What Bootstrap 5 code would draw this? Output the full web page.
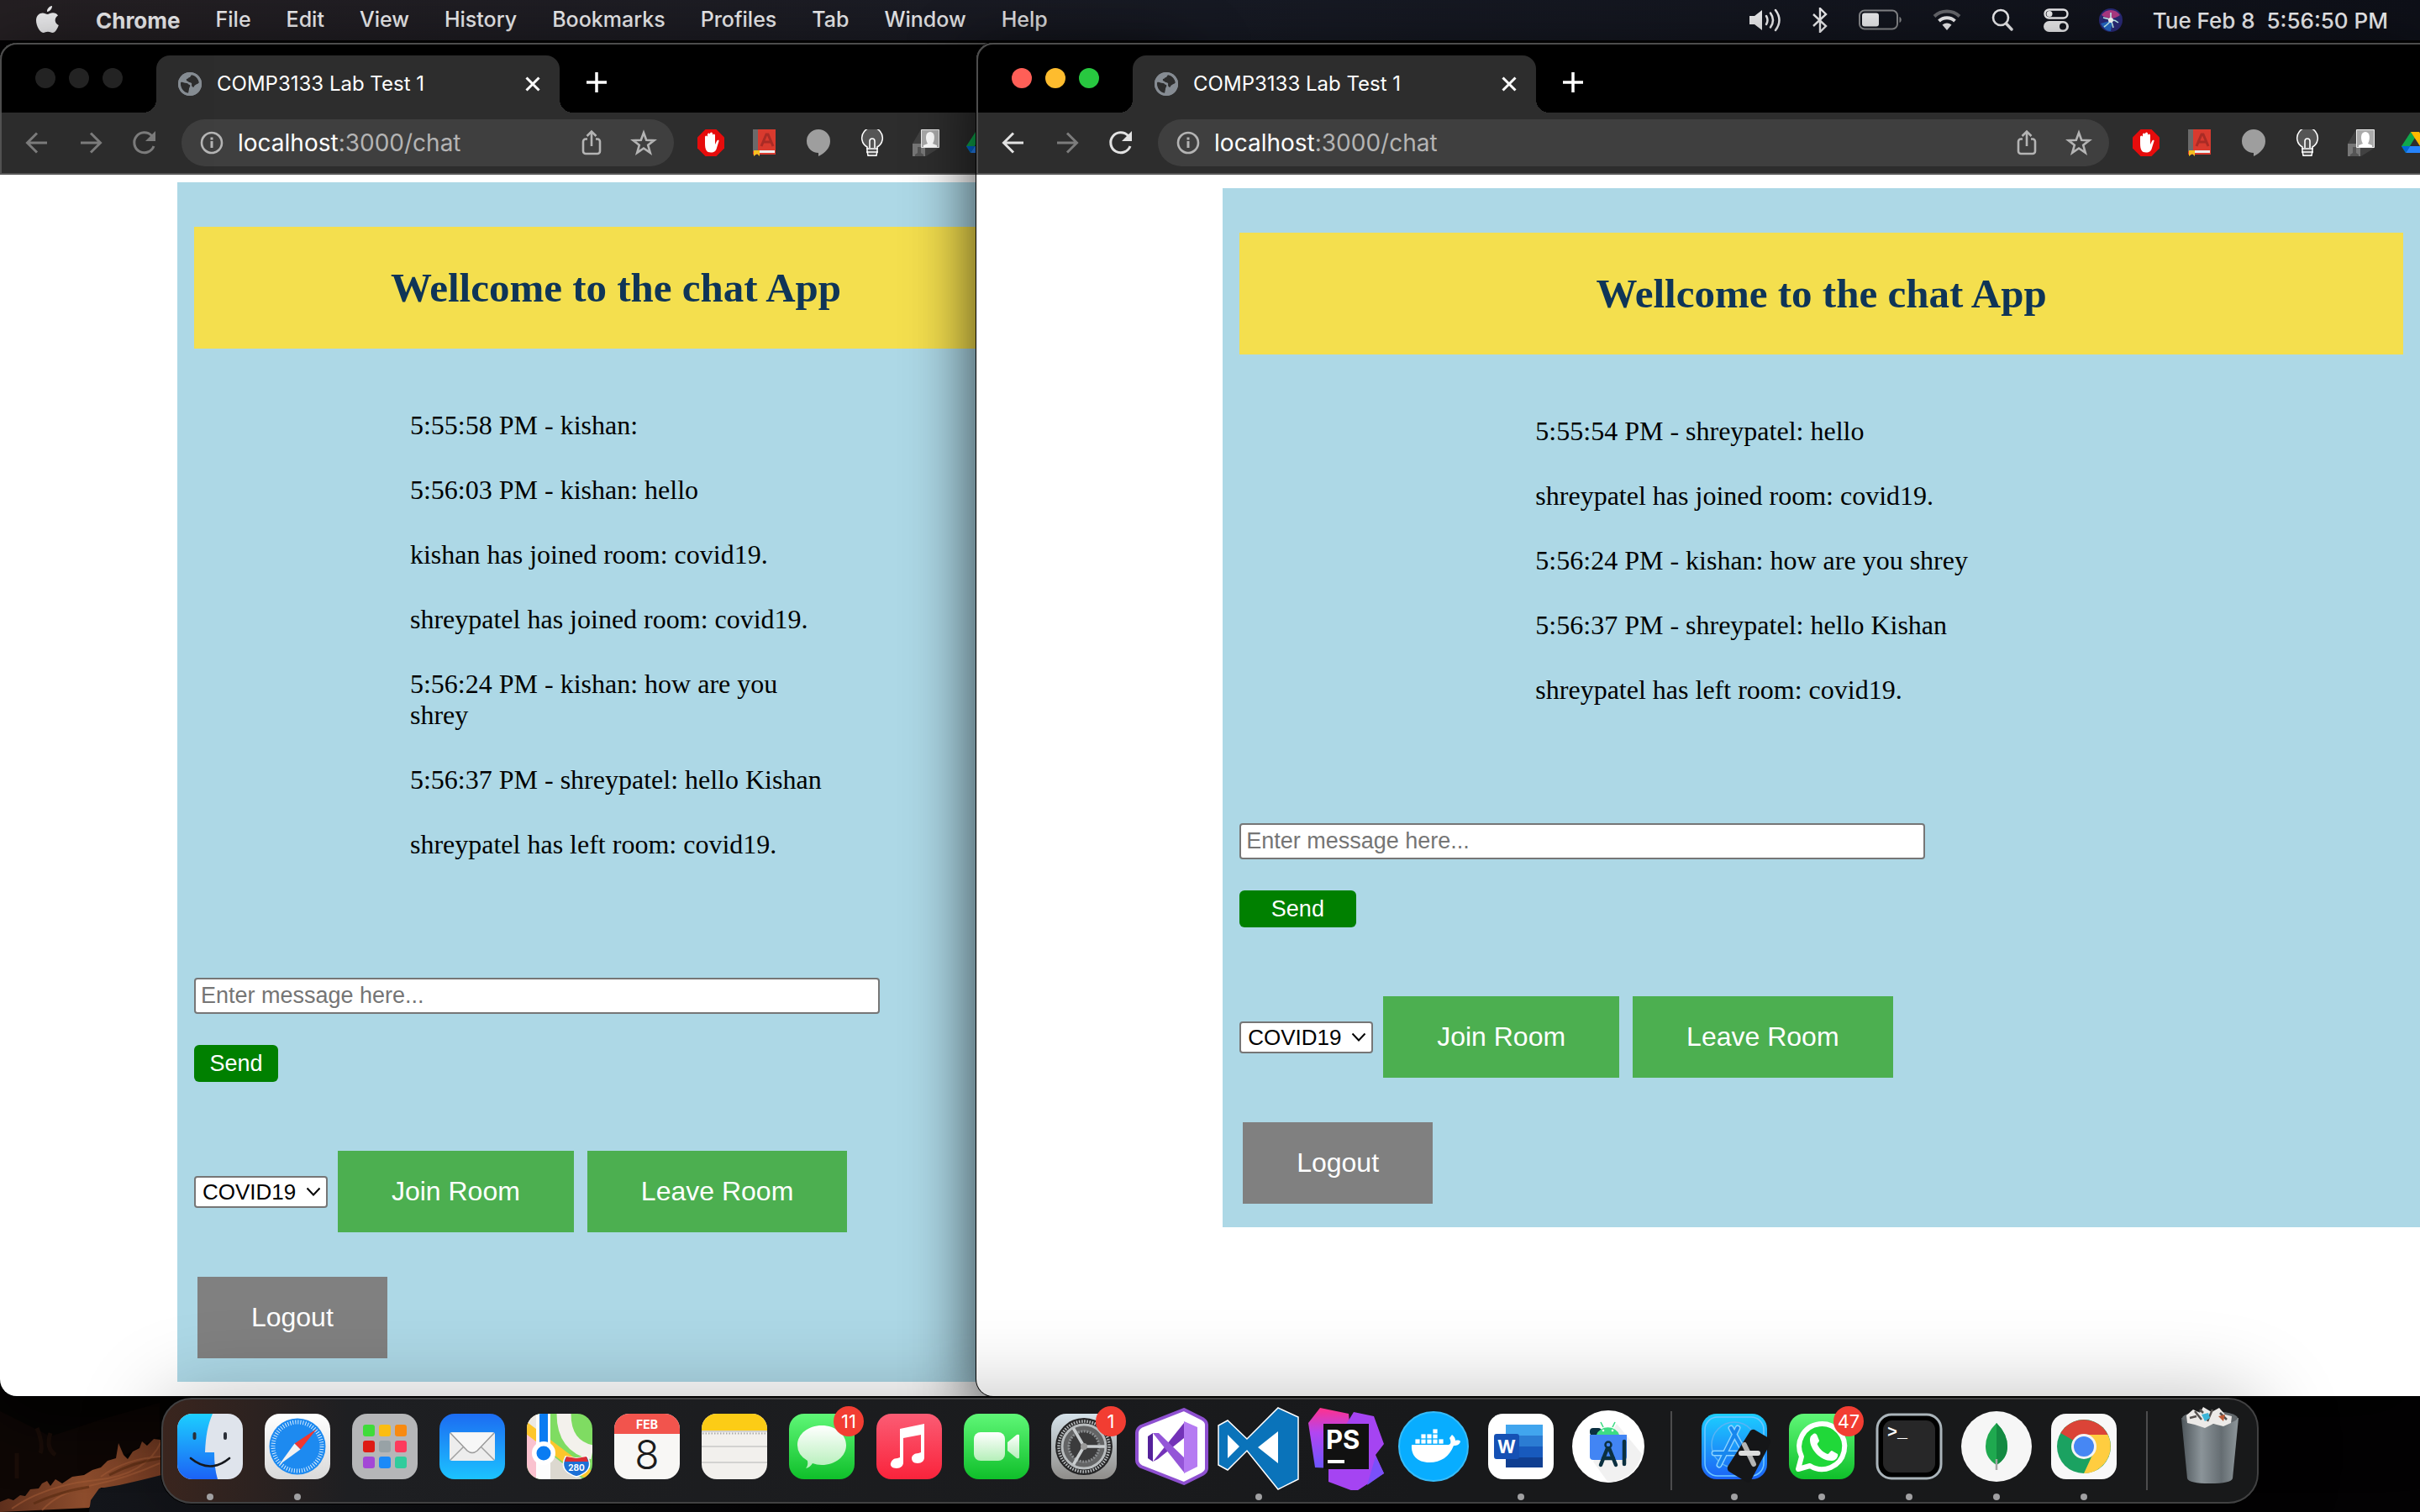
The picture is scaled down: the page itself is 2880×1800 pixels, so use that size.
<!DOCTYPE html>
<html lang="en">
<head>
<meta charset="utf-8">
<meta name="viewport" content="width=device-width, initial-scale=1">
<title>COMP3133 Lab Test 1</title>
<link href="https://cdn.jsdelivr.net/npm/bootstrap@5.3.0/dist/css/bootstrap.min.css" rel="stylesheet">
<style>
  body { background: #030203; font-family: Inter, "Liberation Sans", sans-serif; color: #fff; }
  a { text-decoration: none; color: inherit; }
  button { border: 0; padding: 0; background: none; color: inherit; }
  svg { display: block; flex: none; }
  .wallpaper { left: 0; bottom: 0; }
  .menubar { height: 48px; background: linear-gradient(90deg, #241f22, #171a24 50%, #0e1018); font-size: 25px; font-weight: 500; color: #ececee; padding: 0 38px 0 40px; }
  .menubar .menus { gap: 42px; }
  .menubar .appname, .menubar .clock { font-size: 26px; }
  .menubar .status { gap: 36px; }
  .desk { height: calc(100vh - 48px); }
  .win { top: 3px; bottom: 138px; border-radius: 20px; background: #fff; isolation: isolate; box-shadow: 0 0 0 1px #000, 0 20px 80px rgba(0,0,0,.75); }
  .win::before { content: ""; position: absolute; z-index: 2; top: 0; left: 0; right: 0; height: 155px; border: 2px solid #565656; border-bottom: 0; border-radius: 20px 20px 0 0; pointer-events: none; opacity: .9; }
  .win-one { left: 0; width: 48.82%; }
  .win-two { left: 40.35%; right: 0; border-radius: 20px 0 0 20px; }
  .win-two::before { border-right: 0; border-radius: 20px 0 0 0; }
  .tabstrip { height: 83px; background: #000; padding: 15px 0 0 42px; }
  .lights { gap: 16px; margin: 0 40px 14px 0; }
  .lights span { width: 24px; height: 24px; border-radius: 50%; background: #242424; }
  .win-two .lights span:nth-child(1) { background: #ff5f57; }
  .win-two .lights span:nth-child(2) { background: #febc2e; }
  .win-two .lights span:nth-child(3) { background: #28c840; }
  .tab { width: 480px; height: 68px; background: #2d2d2d; border-radius: 16px 16px 0 0; padding: 0 23px 0 26px; font-size: 24px; gap: 18px; position: relative; }
  .tab::before, .tab::after { content: ""; position: absolute; bottom: 0; width: 16px; height: 16px; }
  .tab::before { right: 100%; background: radial-gradient(circle at 0 0, #000 16px, #2d2d2d 16px); }
  .tab::after { left: 100%; background: radial-gradient(circle at 100% 0, #000 16px, #2d2d2d 16px); }
  .plus { margin: 0 0 4px 31px; }
  .toolbar { height: 74px; background: #2d2d2d; border-bottom: 2px solid #565656; padding-left: 28px; color: #e2e2e2; }
  .toolbar .navs { gap: 32px; margin-right: 28px; }
  .win-one .navs, .dim { color: #7c7c7c; }
  .omni { height: 56px; border-radius: 28px; background: #3f3f3f; padding: 0 20px 0 22px; color: #b4b4b4; min-width: 0; }
  .omni .url { font-size: 28px; margin-left: 17px; }
  .exts { width: 604px; padding-left: 28px; gap: 32px; }
  .win-two .exts { width: 370px; }
  .exts svg { width: 32px; height: 32px; }

  .chat { margin-left: 15%; width: calc(70% + 60px); background: #add8e6; padding: 53px 20px 28px; color: #000; }
  .win-one .page { padding-top: 9px; }
  .win-two .page { padding-top: 16px; }
  .win-two .chat { margin-left: 17.06%; width: auto; }
  .chat h1 { background: #f4df4e; color: #0f3557; font: bold 49px/145px "Liberation Serif", serif; height: 145px; margin: 0 0 73px; text-align: center; }
  .chat ul { font: 32px/37px "Liberation Serif", serif; width: 50%; margin: 0 0 140px 25%; padding: 0 0 0 6px; list-style: none; }
  .chat li + li { margin-top: 40px; }
  .chat input, .chat select, .chat button { font-family: "Liberation Sans", sans-serif; display: block; }
  .chat input { width: 816px; height: 43px; border: 2px solid #767676; border-radius: 4px; padding: 0 6px; font-size: 27px; line-height: 39px; margin-bottom: 37px; }
  .chat input::placeholder { color: #757575; }
  .chat .send { width: 10%; height: 44px; border-radius: 6px; background: #008000; color: #fff; font-size: 27px; line-height: 44px; margin-bottom: 82px; }
  .chat select { width: 159px; height: 38px; margin-right: 12px; font-size: 26px; line-height: 34px; padding: 0 8px; border: 2px solid #767676; border-radius: 4px; color: #000; appearance: none; background: #fff url("data:image/svg+xml,%3Csvg xmlns='http://www.w3.org/2000/svg' width='18' height='12'%3E%3Cpath d='M1.5 1.500l7.500 8 7.500-8' fill='none' stroke='%23000' stroke-width='2'/%3E%3C/svg%3E") no-repeat right 6px center; }
  .chat .big { background: #4caf50; color: #fff; font-size: 32px; line-height: 37px; padding: 30px 64px; margin-right: 16px; }
  .chat .out { background: #808080; margin: 53px 0 0 4px; }

  .dock { z-index: 5; left: 50%; bottom: 10px; transform: translateX(-50%); border: 2px solid #414142; border-radius: 36px; background: linear-gradient(90deg, #3a251e, #1e1f22 220px, #18191b 60%, #18191a); padding: 4px 4px 2px; height: 126px; box-shadow: 0 0 0 1px #000, 0 0 100px rgba(0,0,0,.26); }
  .dock a { width: 104px; }
  .dock a.running::after { content: ""; position: absolute; left: 48px; top: 108px; width: 8px; height: 8px; border-radius: 4px; background: #a0a0a2; }
  .dock .alert-dot { position: absolute; left: 66px; top: 4px; width: 36px; height: 36px; border-radius: 50%; background: #f23d32; font-size: 22px; line-height: 36px; text-align: center; }
  .dock .rule { width: 2px; height: 94px; margin: 10px 22px 0; background: #4c4c4d; }
</style>
<script src="https://cdn.jsdelivr.net/npm/bootstrap@5.3.0/dist/js/bootstrap.bundle.min.js"></script>
</head>
<body class="overflow-hidden position-relative">

<svg class="position-absolute" width="0" height="0" aria-hidden="true">
  <defs>
    <linearGradient id="gBlue" x2="0" y2="1"><stop stop-color="#1c6cf2"/><stop offset="1" stop-color="#1cc3ff"/></linearGradient>
    <linearGradient id="gFind" x2="0" y2="1"><stop stop-color="#1ccfff"/><stop offset="1" stop-color="#1c62f5"/></linearGradient>
    <linearGradient id="gGreen" x2="0" y2="1"><stop stop-color="#5ff777"/><stop offset="1" stop-color="#0fbf2a"/></linearGradient>
    <linearGradient id="gWhite" x2="0" y2="1"><stop stop-color="#fff"/><stop offset="1" stop-color="#d9d9d9"/></linearGradient>
    <linearGradient id="gRed" x2="0" y2="1"><stop stop-color="#fb5c74"/><stop offset="1" stop-color="#fa233b"/></linearGradient>
    <linearGradient id="gBubble" x2="0" y2="1"><stop stop-color="#fff"/><stop offset="1" stop-color="#b5efb9"/></linearGradient>
    <linearGradient id="gGear" x2="0" y2="1"><stop stop-color="#d5e2ea"/><stop offset="1" stop-color="#8f8d8a"/></linearGradient>
    <linearGradient id="gCan" x2="1" y2="0"><stop stop-color="#4e565b"/><stop offset=".35" stop-color="#8b9499"/><stop offset=".7" stop-color="#656d72"/><stop offset="1" stop-color="#8e979b"/></linearGradient>
    <linearGradient id="gRock" x2="1" y2="0"><stop stop-color="#5e2f1c"/><stop offset=".5" stop-color="#8d4d2d"/><stop offset="1" stop-color="#733a22"/></linearGradient>
    <linearGradient id="gLake" x2="1" y2="0"><stop stop-color="#14161b"/><stop offset="1" stop-color="#030203"/></linearGradient>
    <linearGradient id="gStorm" x2="0" y2="1"><stop stop-color="#ff318c"/><stop offset=".4" stop-color="#b345f1"/><stop offset="1" stop-color="#6b57ff"/></linearGradient>
    <clipPath id="tile"><rect x="13" y="13" width="78" height="78" rx="18"/></clipPath>
    <symbol id="globe" viewBox="0 0 28 28"><circle cx="14" cy="14" r="14" fill="#868c93"/><path d="M3 12c3-1 4 1 7 1 2 0 2 2 4 2 1 2-1 3-1 5l-1 5C6 25 2 19 3 12zM16 3c4 0 8 4 9 9-2 3-5 2-6 5-1 2-3 0-3-2 1-2-1-3-3-3-1-2-4-1-3-4 2 0 2-2 4-2z" fill="#2d2d2d"/><circle cx="14" cy="14" r="12.500" fill="none" stroke="#868c93" stroke-width="3"/></symbol>
    <symbol id="back" viewBox="0 0 32 32"><path d="M28 16H6M16 4.500L4.500 16 16 27.500" fill="none" stroke="currentColor" stroke-width="3"/></symbol>
    <symbol id="fwd" viewBox="0 0 32 32"><path d="M4 16h22M16 4.500L27.500 16 16 27.500" fill="none" stroke="currentColor" stroke-width="3"/></symbol>
    <symbol id="reload" viewBox="0 0 32 32"><path d="M27 20A12 12 0 1 1 24.500 7.500" fill="none" stroke="currentColor" stroke-width="3"/><path d="M29 2v12H17z" fill="currentColor"/></symbol>
    <symbol id="info" viewBox="0 0 28 28"><circle cx="14" cy="14" r="12" fill="none" stroke="currentColor" stroke-width="2.600"/><path d="M14 12v8M14 7.500v3" stroke="currentColor" stroke-width="3"/></symbol>
    <symbol id="share" viewBox="0 0 28 32"><path d="M9 11.500H7a3 3 0 0 0-3 3V26a3 3 0 0 0 3 3h14a3 3 0 0 0 3-3V14.500a3 3 0 0 0-3-3h-2M14 20V3M8.500 8L14 2.500 19.500 8" fill="none" stroke="currentColor" stroke-width="2.600"/></symbol>
    <symbol id="star" viewBox="0 0 32 32"><path d="M16 4l3.200 8.800 9.300.3-7.300 5.700 2.600 9L16 22.500 8.200 27.800l2.600-9L3.500 13.100l9.300-.3z" fill="none" stroke="currentColor" stroke-width="2.600"/></symbol>
    <symbol id="hand" viewBox="0 0 32 32"><path d="M9.500 0h13L32 9.500v13L22.500 32h-13L0 22.500v-13z" fill="#e60c0c"/><path d="M9 17V9a1.500 1.500 0 0 1 3 0v6V6a1.500 1.500 0 0 1 3 0v8V5a1.500 1.500 0 0 1 3 0v9V7a1.500 1.500 0 0 1 3 0v11l2-4c1-2 3-1.500 2.500 0L23 22c-1 4-3 5.500-7 5.500-5 0-7-3-7-10.500z" fill="#fff"/></symbol>
    <symbol id="book" viewBox="0 0 32 32"><path d="M2 0h27v30H2z" fill="#d93a2e"/><path d="M2 0h6v26H2z" fill="#6a6a6a"/><path d="M6 25h22v3H6z" fill="#eee"/><path d="M3 25h7v7l-3-3-4 3z" fill="#f4c020"/><path d="M12 20l6-14h2l6 14M14 15h9" fill="none" stroke="#a92b25" stroke-width="3"/></symbol>
    <symbol id="chatdot" viewBox="0 0 32 32"><path d="M16 0a14 14 0 0 1 14 14c0 8-6 14-14 18v-4A14 14 0 0 1 16 0z" fill="#9e9e9e"/></symbol>
    <symbol id="bulb" viewBox="0 0 32 32"><path d="M10 21a12.300 12.300 0 1 1 12 0v5l-1 5.200H11L10 26z" fill="#555" stroke="#fff" stroke-width="1.500"/><path d="M13 22v-8a3 3 0 0 1 6 0v8M9 23h14M9 27h14" fill="none" stroke="#fff" stroke-width="1.600"/></symbol>
    <symbol id="people" viewBox="0 0 32 32"><path d="M10 0h22v22L16 32H0V17z" fill="#414141"/><path d="M0 17h15v15H0z" fill="#777"/><path d="M3 32v-2l3-2v-7h4v7l3 2v2z" fill="#555"/><path d="M10.500.500h21v21h-21z" fill="#aaa" stroke="#eee"/><path d="M13 21v-2l5-2c-3-5-3-14 3-14s6 9 3 14l5 2v2z" fill="#fff"/></symbol>
    <symbol id="drive" viewBox="0 0 32 32"><path d="M11 3L0 20l5 8L16 10z" fill="#0fa84c"/><path d="M11 3h10l11 17H22z" fill="#ffba00"/><path d="M5 28l5-8h22l-5 8z" fill="#2684fc"/><path d="M0 20h10l-5 8z" fill="#0066da"/></symbol>
  </defs>
</svg>

<svg class="wallpaper position-absolute" width="1000" height="160" viewBox="0 0 1000 160" aria-hidden="true">
  <path d="M0 0h260v160H0z" fill="#060403"/>
  <path d="M0 40l60 30 60-20 70-20v40L120 108 0 150z" fill="#0e0705"/>
  <path d="M44 60q8 20 4 30M60 66q-6 18 6 26M20 90v30" stroke="#1a0d08" stroke-width="5" fill="none"/>
  <path d="M0 160v-12l10-4 6 2 8-6 6 1 6-8 10-1 4-6 6-3 4 6 6-8 8 5 12-8 14-2 10-6 10-3 8-8 10-3 3-18 6 14 5 5 6-9 8-4 3-8 6 5 8-8 8 1 4-4 6 1v60H120l-14 24z" fill="url(#gRock)"/>
  <path d="M14 156q40-28 100-34t78-46M50 158q20-22 60-30t80-26M120 118q30-22 72-24" stroke="#a85d37" stroke-width="2" fill="none" opacity=".5"/>
  <path d="M40 150q30-14 66-20M130 116q30-16 62-20" stroke="#54280f" stroke-width="3" fill="none" opacity=".6"/>
  <path d="M106 160l2-14 10-14 24-4 26-6 24-6h808v44z" fill="url(#gLake)"/>
</svg>

<nav class="menubar d-flex align-items-center justify-content-between" aria-label="Menu bar">
  <div class="menus d-flex align-items-center">
    <a href="#" aria-label="Apple"><svg width="32" height="34" viewBox="0 0 32 34"><path d="M22 0c.3 3-2.500 6.800-6 7C15.700 3.500 18.500.600 22 0zM29 11.500c-5 3-4 9.500.8 11.500-1.300 3.800-4 9-7.300 9-2 0-3-1.200-5.500-1.200S13.500 32 11.500 32C7.500 32 3 23.500 3 17.500 3 11.500 7 8.500 10.700 8.500c2.300 0 4.300 1.500 5.800 1.500S20.200 8.300 23 8.300c2.500 0 4.700 1.200 6 3.200z" fill="#ececee"/></svg></a>
    <a href="#" class="fw-bold appname">Chrome</a><a href="#">File</a><a href="#">Edit</a><a href="#">View</a><a href="#">History</a><a href="#">Bookmarks</a><a href="#">Profiles</a><a href="#">Tab</a><a href="#">Window</a><a href="#">Help</a>
  </div>
  <div class="status d-flex align-items-center">
    <svg width="38" height="28" viewBox="0 0 38 28"><path d="M0 9h6l9-7v24l-9-7H0z" fill="#ececee"/><path d="M20 9q3 5 0 10M25 5.500q6 8.500 0 17M31 2q9 12 0 24" fill="none" stroke="#ececee" stroke-width="2.500" stroke-linecap="round"/></svg>
    <svg width="20" height="30" viewBox="0 0 20 30"><path d="M2 8l15 14-7 7V1l7 7L2 22" fill="none" stroke="#ececee" stroke-width="2.400"/></svg>
    <svg width="52" height="26" viewBox="0 0 52 26"><rect x="1" y="1.500" width="45" height="22" rx="6" fill="none" stroke="#858689" stroke-width="2"/><rect x="4" y="4.500" width="20" height="16" rx="3" fill="#ececee"/><path d="M48.500 9c3 1 3 6 0 7z" fill="#858689"/></svg>
    <svg width="34" height="26" viewBox="0 0 34 26"><path d="M2 8.500a22 22 0 0 1 30 0" fill="none" stroke="#65666b" stroke-width="4"/><path d="M7.500 14a14 14 0 0 1 19 0" fill="none" stroke="#ececee" stroke-width="4"/><path d="M11.500 18.500q5.500-4 11 0L17 25z" fill="#ececee"/></svg>
    <svg width="26" height="28" viewBox="0 0 26 28"><circle cx="11" cy="11" r="9" fill="none" stroke="#ececee" stroke-width="2.600"/><path d="M17.500 18l6.500 7" stroke="#ececee" stroke-width="3.400" stroke-linecap="round"/></svg>
    <svg width="30" height="28" viewBox="0 0 30 28"><rect x="1.500" y="1.500" width="27" height="10" rx="5" fill="none" stroke="#ececee" stroke-width="2.400"/><circle cx="7" cy="6.500" r="3.500" fill="#ececee"/><rect y="15" width="30" height="13" rx="6.500" fill="#ececee"/><circle cx="23" cy="21.500" r="4" fill="#14161e"/></svg>
    <svg width="28" height="28" viewBox="0 0 28 28"><circle cx="14" cy="14" r="14" fill="#2a2a78"/><path d="M3 8a13 13 0 0 1 22 0q-11 8-22 0z" fill="#b03a86"/><path d="M2 18q6 10 12 9l2-13z" fill="#2469c8"/><path d="M5 11q6 1 9 3 4-1 9 3M14 5v9q2 4 3 9M14 14q-2 4-8 8" stroke="#c5f5f5" stroke-width="1.600" fill="none"/><circle cx="14" cy="14" r="3" fill="#fff"/></svg>
    <span class="clock">Tue Feb 8&nbsp; 5:56:50 PM</span>
  </div>
</nav>

<main class="desk position-relative">
  <section class="win win-one position-absolute overflow-hidden" aria-label="Chat window of kishan">
    <div class="tabstrip d-flex align-items-center">
      <div class="lights d-flex"><span></span><span></span><span></span></div>
      <div class="tab d-flex align-items-center">
        <svg width="28" height="28"><use href="#globe"/></svg><span class="flex-grow-1">COMP3133 Lab Test 1</span>
        <button aria-label="Close tab"><svg width="18" height="18" viewBox="0 0 18 18"><path d="M1.500 1.500l15 15m0-15l-15 15" stroke="#fff" stroke-width="3"/></svg></button>
      </div>
      <button class="plus" aria-label="New tab"><svg width="26" height="26" viewBox="0 0 26 26"><path d="M13 1v24M1 13h24" stroke="#fff" stroke-width="3.500"/></svg></button>
    </div>
    <div class="toolbar d-flex align-items-center">
      <div class="navs d-flex"><button aria-label="Back"><svg width="32" height="32"><use href="#back"/></svg></button><button aria-label="Forward"><svg width="32" height="32"><use href="#fwd"/></svg></button><button aria-label="Reload"><svg width="32" height="32"><use href="#reload"/></svg></button></div>
      <div class="omni d-flex align-items-center flex-grow-1">
        <svg width="28" height="28"><use href="#info"/></svg>
        <span class="url flex-grow-1"><span class="text-white">localhost</span>:3000/chat</span>
        <button class="me-4 pe-2" aria-label="Share"><svg width="28" height="32"><use href="#share"/></svg></button>
        <button aria-label="Bookmark"><svg width="32" height="32"><use href="#star"/></svg></button>
      </div>
      <div class="exts d-flex flex-shrink-0"><svg><use href="#hand"/></svg><svg><use href="#book"/></svg><svg><use href="#chatdot"/></svg><svg><use href="#bulb"/></svg><svg><use href="#people"/></svg><svg><use href="#drive"/></svg></div>
    </div>
    <div class="page">
      <div class="chat">
        <h1>Wellcome to the chat App</h1>
        <ul>
          <li>5:55:58 PM - kishan:</li>
          <li>5:56:03 PM - kishan: hello</li>
          <li>kishan has joined room: covid19.</li>
          <li>shreypatel has joined room: covid19.</li>
          <li>5:56:24 PM - kishan: how are you shrey</li>
          <li>5:56:37 PM - shreypatel: hello Kishan</li>
          <li>shreypatel has left room: covid19.</li>
        </ul>
        <input type="text" placeholder="Enter message here..." aria-label="Message">
        <button class="send">Send</button>
        <div class="d-flex align-items-center">
          <select aria-label="Room"><option>COVID19</option></select>
          <button class="big">Join Room</button><button class="big">Leave Room</button>
        </div>
        <button class="big out">Logout</button>
      </div>
    </div>
  </section>

  <section class="win win-two position-absolute" aria-label="Chat window of shreypatel">
    <div class="tabstrip d-flex align-items-center" style="border-top-left-radius:20px">
      <div class="lights d-flex"><span></span><span></span><span></span></div>
      <div class="tab d-flex align-items-center">
        <svg width="28" height="28"><use href="#globe"/></svg><span class="flex-grow-1">COMP3133 Lab Test 1</span>
        <button aria-label="Close tab"><svg width="18" height="18" viewBox="0 0 18 18"><path d="M1.500 1.500l15 15m0-15l-15 15" stroke="#fff" stroke-width="3"/></svg></button>
      </div>
      <button class="plus" aria-label="New tab"><svg width="26" height="26" viewBox="0 0 26 26"><path d="M13 1v24M1 13h24" stroke="#fff" stroke-width="3.500"/></svg></button>
    </div>
    <div class="toolbar d-flex align-items-center">
      <div class="navs d-flex"><button aria-label="Back"><svg width="32" height="32"><use href="#back"/></svg></button><button class="dim" aria-label="Forward"><svg width="32" height="32"><use href="#fwd"/></svg></button><button aria-label="Reload"><svg width="32" height="32"><use href="#reload"/></svg></button></div>
      <div class="omni d-flex align-items-center flex-grow-1">
        <svg width="28" height="28"><use href="#info"/></svg>
        <span class="url flex-grow-1"><span class="text-white">localhost</span>:3000/chat</span>
        <button class="me-4 pe-2" aria-label="Share"><svg width="28" height="32"><use href="#share"/></svg></button>
        <button aria-label="Bookmark"><svg width="32" height="32"><use href="#star"/></svg></button>
      </div>
      <div class="exts d-flex flex-shrink-0 overflow-hidden"><svg><use href="#hand"/></svg><svg><use href="#book"/></svg><svg><use href="#chatdot"/></svg><svg><use href="#bulb"/></svg><svg><use href="#people"/></svg><svg><use href="#drive"/></svg></div>
    </div>
    <div class="page">
      <div class="chat">
        <h1>Wellcome to the chat App</h1>
        <ul>
          <li>5:55:54 PM - shreypatel: hello</li>
          <li>shreypatel has joined room: covid19.</li>
          <li>5:56:24 PM - kishan: how are you shrey</li>
          <li>5:56:37 PM - shreypatel: hello Kishan</li>
          <li>shreypatel has left room: covid19.</li>
        </ul>
        <input type="text" placeholder="Enter message here..." aria-label="Message">
        <button class="send">Send</button>
        <div class="d-flex align-items-center">
          <select aria-label="Room"><option>COVID19</option></select>
          <button class="big">Join Room</button><button class="big">Leave Room</button>
        </div>
        <button class="big out">Logout</button>
      </div>
    </div>
  </section>

  <nav class="dock position-absolute d-flex" aria-label="Dock">
    <a href="#" class="running position-relative" aria-label="Finder"><svg width="104" height="104"><g clip-path="url(#tile)"><path d="M13 13h78v78H13z" fill="#dfe4ec"/><path d="M13 13h42c-6 14-8 26-9 46h11c0 12 1 22 4 32H13z" fill="url(#gFind)"/></g><path d="M33.500 37v5M70 37v5" stroke="#2a2f38" stroke-width="4" stroke-linecap="round"/><path d="M29 66q23 19 46 0" fill="none" stroke="#15181d" stroke-width="2.600" stroke-linecap="round"/></svg></a>
    <a href="#" class="running position-relative" aria-label="Safari"><svg width="104" height="104"><rect x="13" y="13" width="78" height="78" rx="18" fill="url(#gWhite)"/><circle cx="52" cy="52" r="33.500" fill="#1d8af0"/><circle cx="52" cy="52" r="29" fill="none" stroke="#d8edff" stroke-width="5" stroke-dasharray="1 2.040"/><path d="M75 31L55.500 55.500 48.500 48.500z" fill="#f0372f"/><path d="M30 74l18.500-25.500 7 7z" fill="#f2f2f2"/></svg></a>
    <a href="#" aria-label="Launchpad"><svg width="104" height="104"><rect x="13" y="13" width="78" height="78" rx="18" fill="#b5b6b8"/><rect x="26" y="26" width="14" height="14" rx="3" fill="#3fdc3a"/><rect x="45" y="26" width="14" height="14" rx="3" fill="#fbbd12"/><rect x="64" y="26" width="14" height="14" rx="3" fill="#f88a10"/><rect x="26" y="45" width="14" height="14" rx="3" fill="#de1b14"/><rect x="45" y="45" width="14" height="14" rx="3" fill="#98a2a6"/><rect x="64" y="45" width="14" height="14" rx="3" fill="#fd3a5c"/><rect x="26" y="64" width="14" height="14" rx="3" fill="#a347d6"/><rect x="45" y="64" width="14" height="14" rx="3" fill="#1b8af8"/><rect x="64" y="64" width="14" height="14" rx="3" fill="#30cc9c"/></svg></a>
    <a href="#" aria-label="Mail"><svg width="104" height="104"><rect x="13" y="13" width="78" height="78" rx="18" fill="url(#gBlue)"/><rect x="25" y="35" width="54" height="34" rx="3" fill="#ededed"/><path d="M26 68l16-16M78 68L62 52" stroke="#a0a0a0" stroke-width="1.500"/><path d="M26 36l20 21q6 5 12 0l20-21" fill="#f7f7f7" stroke="#9a9a9a" stroke-width="1.500"/></svg></a>
    <a href="#" aria-label="Maps"><svg width="104" height="104"><g clip-path="url(#tile)"><path d="M13 13h78v78H13z" fill="#7fdc62"/><path d="M13 13h12v78H13z" fill="#fac2cf"/><path d="M13 13h12v24L13 26z" fill="#ece9e4"/><path d="M40 60l40 31H40z" fill="#dcd8cf"/><path d="M91 59Q57 52 57 13" fill="none" stroke="#f3f1ec" stroke-width="17"/><path d="M10 28l82 62" stroke="#fdc62b" stroke-width="12"/><path d="M24 13h17v78H24z" fill="#fdfdfd"/><path d="M28 13h10v46H28z" fill="#0a7cf2"/><circle cx="33" cy="60" r="14" fill="#fff"/><circle cx="33" cy="60" r="8.500" fill="#0a7cf2"/></g><path d="M59 64l13 2 13-2q9 17-13 24-22-7-13-24z" fill="#1d70d6" stroke="#fff" stroke-width="1.500"/><path d="M60 64l12 2 12-2 2 6H58z" fill="#db2e36"/><text x="72" y="81" font-size="10" font-weight="700" fill="#fff" text-anchor="middle">280</text></svg></a>
    <a href="#" aria-label="Calendar"><svg width="104" height="104"><g clip-path="url(#tile)"><path d="M13 13h78v78H13z" fill="#f8f7f5"/><path d="M13 13h78v24H13z" fill="#f2544d"/></g><text x="52" y="31" font-size="14" font-weight="700" fill="#fff" text-anchor="middle">FEB</text><text x="52" y="79" font-size="48" font-weight="300" fill="#1c1c1c" text-anchor="middle">8</text></svg></a>
    <a href="#" aria-label="Notes"><svg width="104" height="104"><g clip-path="url(#tile)"><path d="M13 13h78v78H13z" fill="#f2f0ed"/><path d="M13 13h78v20H13z" fill="#fccc16"/><path d="M13 34h78M13 52h78M13 71h78" stroke="#c9c8c6" stroke-width="1.500"/><path d="M14 36.500h77" stroke="#aaa" stroke-width="2" stroke-dasharray="1.500 2"/></g></svg></a>
    <a href="#" class="position-relative" aria-label="Messages"><svg width="104" height="104"><rect x="13" y="13" width="78" height="78" rx="18" fill="url(#gGreen)"/><path d="M52 27c16 0 29 10 29 23.500S68 74 52 74q-6 0-11-2-3 5-8 6 3-3 2-9-12-7-12-18.500C23 37 36 27 52 27z" fill="url(#gBubble)"/></svg><span class="alert-dot">11</span></a>
    <a href="#" aria-label="Music"><svg width="104" height="104"><rect x="13" y="13" width="78" height="78" rx="18" fill="url(#gRed)"/><path d="M41 31l29-6v40c0 4-3 7-8 7s-7-3-7-6 3-6 8-6l3-1V38l-21 4v29c0 4-3 7-8 7s-8-3-7-6 3-6 8-6l3-1z" fill="#fff"/></svg></a>
    <a href="#" aria-label="FaceTime"><svg width="104" height="104"><rect x="13" y="13" width="78" height="78" rx="18" fill="url(#gGreen)"/><rect x="25" y="35" width="37" height="34" rx="8" fill="url(#gBubble)"/><path d="M65 47l11-9q3-1 3 1v26q0 2-3 1l-11-9z" fill="url(#gBubble)"/></svg></a>
    <a href="#" class="position-relative" aria-label="System Preferences"><svg width="104" height="104"><rect x="13" y="13" width="78" height="78" rx="18" fill="url(#gGear)"/><circle cx="52" cy="52" r="34" fill="#252526"/><circle cx="52" cy="52" r="30" fill="none" stroke="#b6babc" stroke-width="3.500" stroke-dasharray="1.600 1.540"/><circle cx="52" cy="52" r="26" fill="#636465" stroke="#b9bdbf" stroke-width="3"/><circle cx="52" cy="52" r="18" fill="#3b3b3c" stroke="#8b8e90" stroke-width="3" stroke-dasharray="2 1.500"/><path d="M52 52h25M52 52L39.500 30.500M52 52L39.500 73.500" stroke="#c9cdcf" stroke-width="3.500"/><circle cx="52" cy="52" r="4" fill="#999"/></svg><span class="alert-dot">1</span></a>
    <a href="#" aria-label="Visual Studio"><svg width="104" height="104"><path d="M67 8l22 11q5 3 5 7v52q0 4-5 7L67 96 16 76q-5-3-5-8V36q0-5 5-8z" fill="#fff" stroke="#8e50d0" stroke-width="4" stroke-linejoin="round"/><path d="M24 40v26l6 4V36z" fill="#54219b"/><path d="M30 70l37-46v18L36 67z" fill="#7332b8"/><path d="M30 36l38 48V66L37 36z" fill="#9455d8"/><path d="M67 22l16 7v47l-16 8z" fill="#b57af2"/></svg></a>
    <a href="#" class="running position-relative" aria-label="Visual Studio Code"><svg width="104" height="104"><path d="M75 6l24 11v74L75 103 38 57 15 80 4 74V27l11-6 23 22z" fill="#0a73ba" stroke="#fff" stroke-width="1.500"/><path d="M75 34v38L51 53zM15 38v28l14-14z" fill="#fff"/></svg></a>
    <a href="#" aria-label="PhpStorm"><svg width="104" height="104"><path d="M21 6l34 7 6 66-46-2L7 24z" fill="url(#gStorm)"/><path d="M61 11l24 5 12 33-10 13 10 22-34 22-32-12V60z" fill="#a544f2"/><path d="M87 64l10 20-20 14z" fill="#7a50fa"/><path d="M25 25h54v54H25z" fill="#111"/><text x="28" y="55" font-size="31" font-weight="700" fill="#fff">PS</text><path d="M30 70h20" stroke="#fff" stroke-width="4"/></svg></a>
    <a href="#" aria-label="Docker"><svg width="104" height="104"><circle cx="52" cy="52" r="41" fill="#08adff" stroke="#36bcfa" stroke-width="2"/><path d="M26 50h44c3-1 3-4 1-8l3-4c3 2 4 5 4 7 3-1 6 0 6 1-1 4-4 5-8 5-5 13-15 20-29 20C32 71 25 62 26 50z" fill="#fff"/><path d="M30 43h6v6h-6zm7 0h6v6h-6zm7 0h6v6h-6zm7 0h6v6h-6zm7 0h6v6h-6zM37 37h6v6h-6zm7 0h6v6h-6zm7 0h6v6h-6zM51 31h6v6h-6z" fill="#fff" stroke="#08adff" stroke-width=".8"/></svg></a>
    <a href="#" class="running position-relative" aria-label="Word"><svg width="104" height="104"><rect x="13" y="13" width="78" height="78" rx="18" fill="#fff"/><path d="M34 26h44v13H34z" fill="#41a5ee"/><path d="M34 39h44v13H34z" fill="#2b7cd3"/><path d="M34 52h44v13H34z" fill="#185abd"/><path d="M34 65h44v12H34z" fill="#103f91"/><rect x="20" y="37" width="30" height="30" rx="3" fill="#1551b4"/><text x="35" y="60" font-size="21" font-weight="700" fill="#fff" text-anchor="middle">W</text></svg></a>
    <a href="#" aria-label="Android Studio"><svg width="104" height="104"><circle cx="52" cy="52" r="43" fill="#fff"/><path d="M62 25l30 36q-8 30-40 34L34 70z" fill="#f1f1f1"/><rect x="30" y="30" width="14" height="9" rx="4" fill="#0b3040"/><path d="M30 38h44v26q0 4-4 4H34q-4 0-4-4z" fill="#4285f4"/><path d="M38 38a14 12 0 0 1 27 0z" fill="#3ddc84"/><path d="M43 23l3 6M60 23l-3 6" stroke="#3ddc84" stroke-width="1.600"/><circle cx="46" cy="33" r="1.300" fill="#fff"/><circle cx="57" cy="33" r="1.300" fill="#fff"/><circle cx="52" cy="50" r="3.500" fill="none" stroke="#0b3040" stroke-width="2.500"/><path d="M51 54L43 74M53 54l8 20M46 66h12M71 46v27" stroke="#0b3040" stroke-width="4.500" stroke-linecap="round"/></svg></a>
    <span class="rule"></span>
    <a href="#" class="running position-relative" aria-label="Xcode Simulator"><svg width="104" height="104"><rect x="13" y="13" width="78" height="78" rx="18" fill="url(#gFind)"/><rect x="17" y="17" width="70" height="70" rx="15" fill="none" stroke="#6fc8ff" stroke-width="1.500"/><circle cx="52" cy="50" r="27" fill="none" stroke="#58b4f5" stroke-width="1.500"/><path d="M34 74l22-44M48 30l20 36M28 60h30" stroke="#8cd3ff" stroke-width="7" stroke-linecap="round"/><path d="M34 74l22-44M48 30l20 36M28 60h30" stroke="#1787ee" stroke-width="4" stroke-linecap="round"/><path d="M76 32l17 10q3 2 2 6L72 92q-2 4-6 2L46 82q-3-2-2-6l26-41q2-4 6-3z" fill="#151618"/><path d="M64 50l11 23" stroke="#b4b4b4" stroke-width="6" stroke-linecap="round"/><path d="M60 60h20" stroke="#ddd" stroke-width="6" stroke-linecap="round"/></svg></a>
    <a href="#" class="running position-relative" aria-label="WhatsApp"><svg width="104" height="104"><rect x="13" y="13" width="78" height="78" rx="18" fill="url(#gGreen)"/><path d="M24 79l4-15a27 27 0 1 1 10 11z" fill="#20d839" stroke="#fff" stroke-width="6" stroke-linejoin="round"/><path d="M41 38c3-3 5-1 6 2l2 5c0 2-3 3-2 5 3 6 7 9 12 11 2 0 3-4 5-4l7 4c1 3-2 8-7 8-14 0-26-14-26-25 0-3 1-5 3-6z" fill="#fff"/></svg><span class="alert-dot">47</span></a>
    <a href="#" class="running position-relative" aria-label="Terminal"><svg width="104" height="104"><rect x="14" y="14" width="76" height="76" rx="17" fill="#000" stroke="#aab4ba" stroke-width="3"/><rect x="21" y="21" width="62" height="62" rx="11" fill="#272728"/><text x="26" y="41" font-size="20" font-weight="700" font-family="Liberation Mono, monospace" fill="#fff">&gt;_</text></svg></a>
    <a href="#" class="running position-relative" aria-label="MongoDB Compass"><svg width="104" height="104"><circle cx="52" cy="52" r="42" fill="#f6f6f6"/><path d="M52 24q13 13 13 28 0 14-13 22-13-8-13-22 0-15 13-28z" fill="#1fa94f"/><path d="M52 24q13 13 13 28 0 14-13 22z" fill="#148a42"/><path d="M52 67v13" stroke="#a6a6a6" stroke-width="2.500"/></svg></a>
    <a href="#" class="running position-relative" aria-label="Chrome"><svg width="104" height="104"><rect x="13" y="13" width="78" height="78" rx="18" fill="#f8f8f8"/><circle cx="52" cy="52" r="32" fill="#1ba261"/><path d="M52 52L24.300 36A32 32 0 0 1 80.500 38z" fill="#db4437"/><path d="M52 38h28.500A32 32 0 0 1 52 84l12-26z" fill="#ffcd40"/><circle cx="52" cy="52" r="15" fill="#f4f4f4"/><circle cx="52" cy="52" r="12" fill="#4687f4"/></svg></a>
    <span class="rule"></span>
    <a href="#" aria-label="Trash"><svg width="104" height="104"><path d="M18 18l68 0-7 72q-2 6-27 6t-27-6z" fill="url(#gCan)"/><ellipse cx="52" cy="18" rx="33" ry="8" fill="#62686c"/><path d="M24 15l8-7 8 4 4-7 10 6 9-5 7 8 8 2-1 8-9 4-12-3-10 5-12-4-9-2z" fill="#eceae8"/><path d="M34 10l8 10M55 8l-6 14M64 12l8 8M40 8l4 4M28 18l8-2" stroke="#55514f" stroke-width="2.500"/><path d="M42 14l8-2 2 6-6 4z" fill="#3cb5d8"/><path d="M62 16l8-2-2 8z" fill="#bc5a35"/></svg></a>
  </nav>
</main>
</body>
</html>
